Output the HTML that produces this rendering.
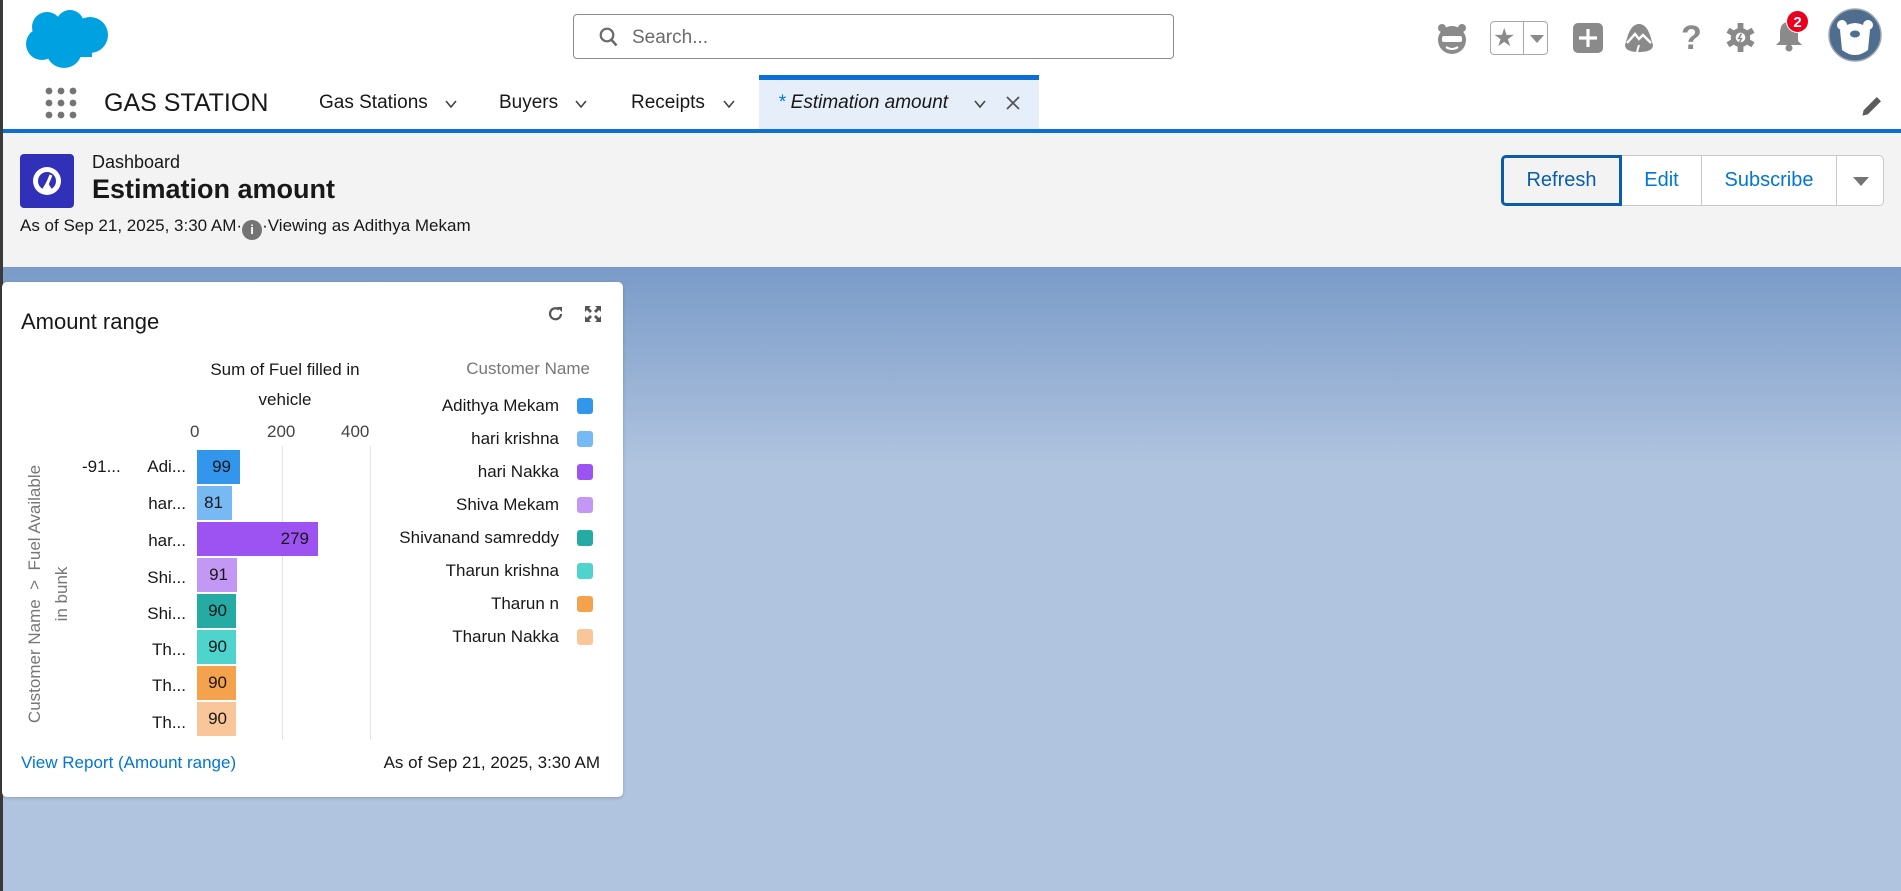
<!DOCTYPE html>
<html><head><meta charset="utf-8">
<style>
*{box-sizing:border-box;margin:0;padding:0}
body{width:1901px;height:891px;overflow:hidden;font-family:"Liberation Sans",sans-serif;background:#b0c4df;position:relative;color:#181818}
.abs{position:absolute}
#frame{position:absolute;left:0;top:0;width:3px;height:891px;background:#3a3a3a}
#top{position:absolute;left:0;top:0;width:1901px;height:79px;background:#fff}
#nav{position:absolute;left:0;top:79px;width:1901px;height:51px;background:#fff}
#navline{position:absolute;left:0;top:129px;width:1901px;height:4px;background:#0b6fd5}
#hdr{position:absolute;left:0;top:133px;width:1901px;height:134px;background:#f3f3f3;box-shadow:0 2px 3px rgba(0,0,0,.25)}
#bg{position:absolute;left:0;top:267px;width:1901px;height:200px;background:linear-gradient(#7a9bc8,#b0c4df)}
.navt{position:absolute;top:92px;font-size:19px;color:#181818}
.chev{position:absolute;top:98px;width:12px;height:12px}
.btn{position:absolute;top:155px;height:51px;border:1px solid #c9c9c9;background:#fff;color:#0176d3;font-size:20px;text-align:center;line-height:49px}
#card{position:absolute;left:2px;top:282px;width:621px;height:515px;background:#fff;border-radius:5px;box-shadow:0 1px 3px rgba(0,0,0,.2)}
.bar{position:absolute;left:195px;height:34px;font-size:17px;text-align:right;padding-right:9px;line-height:34px;color:#181818}
.lbl{position:absolute;right:0;width:60px;text-align:right;font-size:17px}
.leg{position:absolute;right:64px;font-size:17px;text-align:right;white-space:nowrap}
.sw{position:absolute;left:575px;width:16px;height:16px;border-radius:3px}
.ic{position:absolute;fill:#8a8a8a}
</style></head><body>
<div id="top"></div>
<div id="nav"></div>
<div id="hdr"></div>
<div id="bg"></div>
<div id="navline"></div>
<div id="frame"></div>

<svg class="abs" style="left:24px;top:7px" width="90" height="62" viewBox="0 0 90 62">
<g fill="#00a1e0"><circle cx="23" cy="20" r="15"/><circle cx="46" cy="17" r="14"/><circle cx="66" cy="28" r="18"/><circle cx="18" cy="37" r="16"/><circle cx="40" cy="43" r="18"/><rect x="18" y="20" width="50" height="30"/></g></svg>

<div class="abs" style="left:573px;top:14px;width:601px;height:45px;border:1px solid #8c8c8c;border-radius:4px;background:#fff"></div>
<svg class="abs" style="left:599px;top:27px" width="20" height="22" viewBox="0 0 20 22"><circle cx="8" cy="8" r="6.3" fill="none" stroke="#6b6b6b" stroke-width="2.2"/><path d="M12.5 12.8L17.5 18.5" stroke="#6b6b6b" stroke-width="2.6"/></svg>
<div class="abs" style="left:632px;top:27px;font-size:19px;color:#6b6b6b">Search...</div>

<svg class="ic" style="left:1435px;top:21px" width="34" height="34" viewBox="0 0 34 34"><circle cx="7" cy="7" r="4"/><circle cx="27" cy="7" r="4"/><circle cx="17" cy="19" r="14"/><rect x="7" y="15" width="20" height="6" rx="2" fill="#fff"/><path d="M11 26 Q17 30 23 26" stroke="#fff" stroke-width="2" fill="none"/></svg>
<div class="abs" style="left:1490px;top:21px;width:58px;height:34px;border:1px solid #a8a8a8;border-radius:4px"></div>
<div class="abs" style="left:1523px;top:21px;width:1px;height:34px;background:#a8a8a8"></div>
<div class="abs" style="left:1493px;top:23px;font-size:25px;color:#8a8a8a">★</div>
<div class="abs" style="left:1530px;top:35px;width:0;height:0;border-left:7px solid transparent;border-right:7px solid transparent;border-top:8px solid #8a8a8a"></div>
<svg class="ic" style="left:1573px;top:23px" width="30" height="30" viewBox="0 0 30 30"><rect width="30" height="30" rx="5"/><path d="M15 6v18M6 15h18" stroke="#fff" stroke-width="3.2"/></svg>
<svg class="ic" style="left:1624px;top:23px" width="30" height="30" viewBox="0 0 30 30"><path d="M15 1 Q8 1 4 12 L1 22 Q1 29 15 29 Q29 29 29 22 L26 12 Q22 1 15 1Z"/><path d="M3 20 L11 11 L15 16 L19 12 L27 20" stroke="#fff" stroke-width="2.4" fill="none"/><path d="M15 22 L13 29" stroke="#fff" stroke-width="2"/></svg>
<div class="abs" style="left:1681px;top:19px;font-size:34px;color:#8a8a8a;font-weight:bold">?</div>
<svg class="ic" style="left:1726px;top:23px" width="29" height="29" viewBox="0 0 30 30"><g transform="translate(15 15)"><circle r="10"/><g><rect x="-3" y="-15" width="6" height="30"/><rect x="-3" y="-15" width="6" height="30" transform="rotate(60)"/><rect x="-3" y="-15" width="6" height="30" transform="rotate(120)"/></g><circle r="5" fill="#fff"/><path d="M1-4L-2 1H1L-1 5" stroke="#8a8a8a" stroke-width="1.6" fill="none"/></g></svg>
<svg class="ic" style="left:1774px;top:19px" width="30" height="34" viewBox="0 0 30 34"><path d="M15 3 Q24 3 24 14 V22 L28 26 H2 L6 22 V14 Q6 3 15 3Z"/><circle cx="15" cy="29" r="3.5"/></svg>
<div class="abs" style="left:1786px;top:10px;width:23px;height:23px;border-radius:50%;background:#ea001e;color:#fff;font-size:15px;font-weight:bold;text-align:center;line-height:23px;border:1px solid #fff">2</div>
<svg class="abs" style="left:1828px;top:8px" width="54" height="54" viewBox="0 0 54 54"><circle cx="27" cy="27" r="26" fill="#4f6d8f" stroke="#a0a8b0" stroke-width="1.5"/><circle cx="14" cy="17" r="5" fill="#fff"/><circle cx="40" cy="17" r="5" fill="#fff"/><path d="M12 22 Q27 8 42 22 L40 42 Q27 52 14 42Z" fill="#fff"/><ellipse cx="27" cy="26" rx="5" ry="3.5" fill="#4f6d8f"/></svg>

<svg class="abs" style="left:45px;top:87px" width="32" height="32" viewBox="0 0 32 32" fill="#747474"><circle cx="4" cy="4" r="3.4"/><circle cx="16" cy="4" r="3.4"/><circle cx="28" cy="4" r="3.4"/><circle cx="4" cy="16" r="3.4"/><circle cx="16" cy="16" r="3.4"/><circle cx="28" cy="16" r="3.4"/><circle cx="4" cy="28" r="3.4"/><circle cx="16" cy="28" r="3.4"/><circle cx="28" cy="28" r="3.4"/></svg>
<div class="abs" style="left:104px;top:89px;font-size:25px;color:#181818">GAS STATION</div>
<div class="navt" style="left:319px">Gas Stations</div>
<svg class="chev" style="left:445px" viewBox="0 0 12 12"><path d="M1 3L6 9L11 3" stroke="#444" stroke-width="1.6" fill="none"/></svg>
<div class="navt" style="left:499px">Buyers</div>
<svg class="chev" style="left:575px" viewBox="0 0 12 12"><path d="M1 3L6 9L11 3" stroke="#444" stroke-width="1.6" fill="none"/></svg>
<div class="navt" style="left:631px">Receipts</div>
<svg class="chev" style="left:723px" viewBox="0 0 12 12"><path d="M1 3L6 9L11 3" stroke="#444" stroke-width="1.6" fill="none"/></svg>
<div class="abs" style="left:759px;top:75px;width:280px;height:54px;background:#e5eef9;border-top:5px solid #0b6fd5"></div>
<div class="navt" style="left:778px;font-style:italic"><span style="color:#0176d3">*</span> Estimation amount</div>
<svg class="chev" style="left:974px" viewBox="0 0 12 12"><path d="M1 3L6 9L11 3" stroke="#444" stroke-width="1.6" fill="none"/></svg>
<svg class="abs" style="left:1006px;top:96px" width="14" height="14" viewBox="0 0 14 14"><path d="M1 1L13 13M13 1L1 13" stroke="#555" stroke-width="1.8"/></svg>
<svg class="abs" style="left:1860px;top:94px" width="24" height="24" viewBox="0 0 20 20"><path d="M2 18 L3 13.5 L14 2.5 L17.5 6 L6.5 17Z" fill="#5c5c5c"/></svg>

<svg class="abs" style="left:20px;top:154px" width="54" height="54" viewBox="0 0 54 54"><rect width="54" height="54" rx="4" fill="#3030b8"/><circle cx="27" cy="27" r="14" fill="#fff"/><circle cx="27" cy="27" r="9" fill="#3030b8"/><path d="M20 39 L27 27 L34 39Z" fill="#fff"/><path d="M26 33 L31 21" stroke="#fff" stroke-width="3"/></svg>
<div class="abs" style="left:92px;top:152px;font-size:18px">Dashboard</div>
<div class="abs" style="left:92px;top:174px;font-size:27px;font-weight:bold">Estimation amount</div>
<div class="abs" style="left:20px;top:216px;font-size:17px">As of Sep 21, 2025, 3:30 AM·<span style="display:inline-block;width:20px;height:20px;border-radius:50%;background:#747474;color:#fff;font-size:13px;font-weight:bold;text-align:center;line-height:20px;vertical-align:-3px">i</span>·Viewing as Adithya Mekam</div>
<div class="btn" style="left:1501px;width:121px;background:#f3f3f3;border:3px solid #0b5cab;border-radius:5px 0 0 5px;color:#0b5cab;line-height:45px;z-index:2">Refresh</div>
<div class="btn" style="left:1621px;width:81px">Edit</div>
<div class="btn" style="left:1701px;width:136px">Subscribe</div>
<div class="btn" style="left:1836px;width:48px;border-radius:0 5px 5px 0"></div>
<div class="abs" style="left:1853px;top:177px;border-left:8px solid transparent;border-right:8px solid transparent;border-top:9px solid #747474"></div>

<div id="card">
<div class="abs" style="left:19px;top:27px;font-size:22px">Amount range</div>
<svg class="abs" style="left:545px;top:23px" width="18" height="18" viewBox="0 0 18 18"><path d="M14 9 A5.5 5.5 0 1 1 12 4.5" stroke="#555" stroke-width="2.2" fill="none"/><path d="M10 2 L15 2 L15 7Z" fill="#555"/></svg>
<svg class="abs" style="left:582px;top:23px" width="18" height="18" viewBox="0 0 18 18" fill="#555"><path d="M1 1h6l-2 2 3 3-2 2-3-3-2 2zM17 1v6l-2-2-3 3-2-2 3-3-2-2zM1 17v-6l2 2 3-3 2 2-3 3 2 2zM17 17h-6l2-2-3-3 2-2 3 3 2-2z"/></svg>

<div class="abs" style="left:183px;top:73px;width:200px;text-align:center;font-size:17px;line-height:30px">Sum of Fuel filled in<br>vehicle</div>
<div class="abs" style="left:188px;top:140px;font-size:17px;color:#444">0</div>
<div class="abs" style="left:265px;top:140px;font-size:17px;color:#444">200</div>
<div class="abs" style="left:339px;top:140px;font-size:17px;color:#444">400</div>
<div class="abs" style="left:280px;top:164px;width:1px;height:294px;background:#dfe4ea"></div>
<div class="abs" style="left:368px;top:164px;width:1px;height:294px;background:#dfe4ea"></div>

<div class="abs" style="left:-110px;top:300px;width:290px;height:24px;transform:rotate(-90deg);transform-origin:center;font-size:17px;color:#777;text-align:center;white-space:nowrap">Customer Name &nbsp;&gt;&nbsp; Fuel Available</div>
<div class="abs" style="left:22px;top:300px;width:80px;height:24px;transform:rotate(-90deg);font-size:17px;color:#777;text-align:center">in bunk</div>

<div class="abs" style="left:80px;top:175px;font-size:17px">-91...</div>
<div class="abs" style="left:0;top:0;width:184px;height:500px">
<div class="lbl" style="top:175px">Adi...</div>
<div class="lbl" style="top:212px">har...</div>
<div class="lbl" style="top:249px">har...</div>
<div class="lbl" style="top:286px">Shi...</div>
<div class="lbl" style="top:322px">Shi...</div>
<div class="lbl" style="top:358px">Th...</div>
<div class="lbl" style="top:394px">Th...</div>
<div class="lbl" style="top:431px">Th...</div>
</div>
<div class="bar" style="top:168px;width:43px;background:#3296ed">99</div>
<div class="bar" style="top:204px;width:35px;background:#77b9f2">81</div>
<div class="bar" style="top:240px;width:121px;background:#9d53f2">279</div>
<div class="bar" style="top:276px;width:40px;background:#c398f5">91</div>
<div class="bar" style="top:312px;width:39px;background:#26aba4">90</div>
<div class="bar" style="top:348px;width:39px;background:#4ed4cd">90</div>
<div class="bar" style="top:384px;width:39px;background:#f4a24c">90</div>
<div class="bar" style="top:420px;width:39px;background:#f9c69a">90</div>

<div class="abs" style="right:33px;top:77px;font-size:17px;color:#777">Customer Name</div>
<div class="leg" style="top:114px">Adithya Mekam</div><div class="sw" style="top:116px;background:#3296ed"></div>
<div class="leg" style="top:147px">hari krishna</div><div class="sw" style="top:149px;background:#77b9f2"></div>
<div class="leg" style="top:180px">hari Nakka</div><div class="sw" style="top:182px;background:#9d53f2"></div>
<div class="leg" style="top:213px">Shiva Mekam</div><div class="sw" style="top:215px;background:#c398f5"></div>
<div class="leg" style="top:246px">Shivanand samreddy</div><div class="sw" style="top:248px;background:#26aba4"></div>
<div class="leg" style="top:279px">Tharun krishna</div><div class="sw" style="top:281px;background:#4ed4cd"></div>
<div class="leg" style="top:312px">Tharun n</div><div class="sw" style="top:314px;background:#f4a24c"></div>
<div class="leg" style="top:345px">Tharun Nakka</div><div class="sw" style="top:347px;background:#f9c69a"></div>

<div class="abs" style="left:19px;top:471px;font-size:17px;color:#0176d3">View Report (Amount range)</div>
<div class="abs" style="right:23px;top:471px;font-size:17px">As of Sep 21, 2025, 3:30 AM</div>
</div>
</body></html>
